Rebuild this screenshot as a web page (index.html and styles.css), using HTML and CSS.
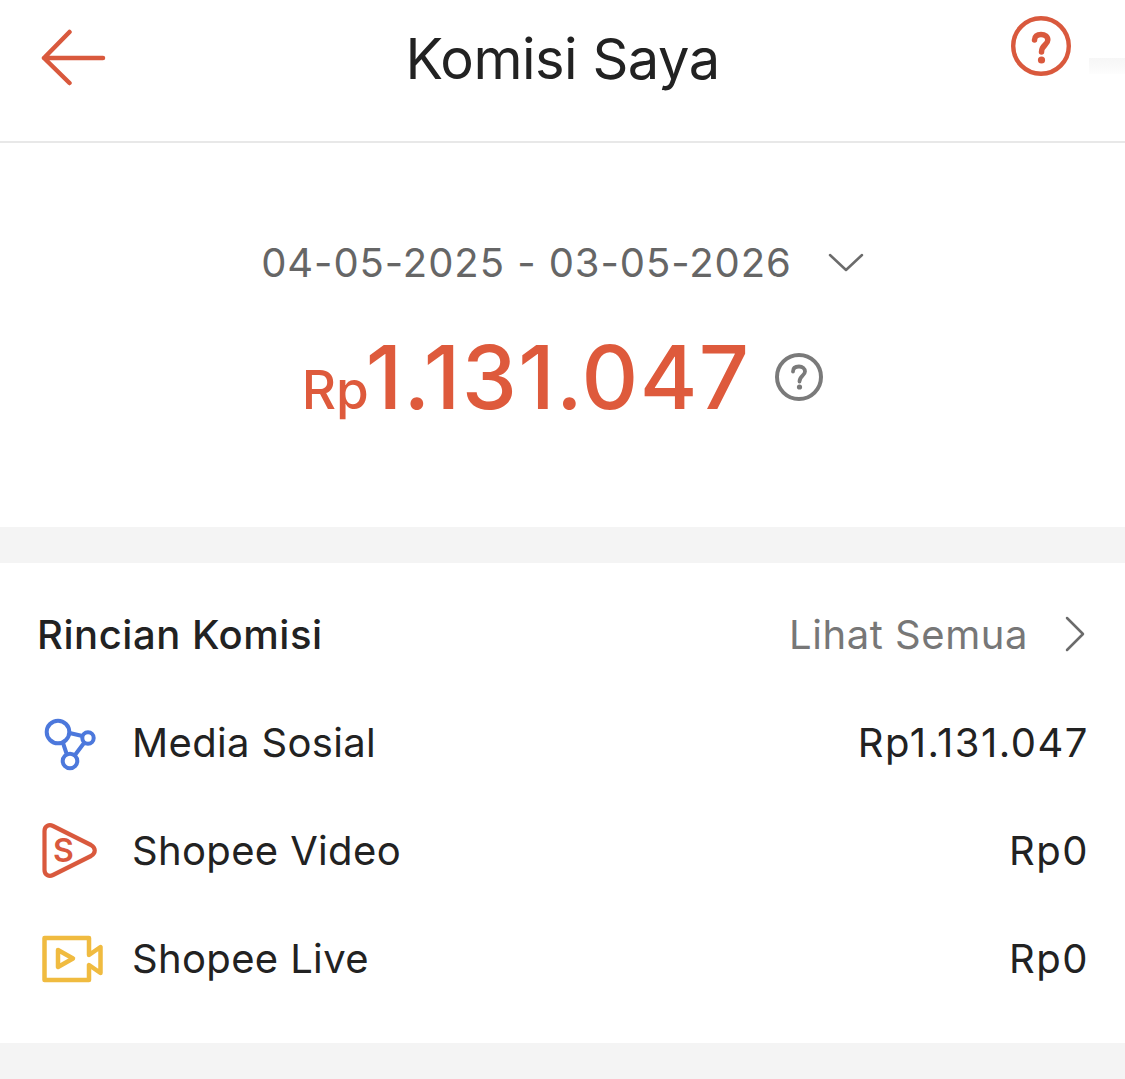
FILE: index.html
```html
<!DOCTYPE html>
<html lang="id">
<head>
    <meta charset="UTF-8">
    <meta name="viewport" content="width=device-width, initial-scale=1.0">
    <title>Komisi Saya</title>
    <link rel="stylesheet" href="styles.css">
</head>
<body>
    <header class="topbar">
        <svg class="back-icon" viewBox="0 0 66 58" fill="none" stroke="#d9593d" stroke-width="4.500" stroke-linecap="round" stroke-linejoin="round">
            <path d="M3 29H62M28.500 3L3 29L28.500 54"/>
        </svg>
        <h1 class="title">Komisi Saya</h1>
        <svg class="help-icon" viewBox="0 0 60 60" fill="none">
            <circle cx="30" cy="30" r="27.800" stroke="#d9593d" stroke-width="4.400"/>
            <path d="M23.500 24C23.500 20.500 26 18.500 30 18.500C34 18.500 36.800 20.500 36.800 24C36.800 29 30.500 29 30.500 36" stroke="#d9593d" stroke-width="5.500" stroke-linecap="round"/>
            <circle cx="30.500" cy="44" r="3.600" fill="#d9593d"/>
        </svg>
        <div class="edge-smudge"></div>
    </header>

    <section class="summary">
        <div class="date-range">
            <span>04-05-2025 - 03-05-2026</span>
            <svg class="chevron-down" viewBox="0 0 36 20" fill="none" stroke="#6b6b6b" stroke-width="2.500" stroke-linecap="round" stroke-linejoin="round">
                <path d="M2 3L18 18L34 3"/>
            </svg>
        </div>
        <div class="total">
            <span class="currency">Rp</span><span class="amount">1.131.047</span>
            <svg class="info-icon" viewBox="0 0 48 48" fill="none">
                <circle cx="24" cy="24" r="22" stroke="#7a7a7a" stroke-width="4"/>
                <path d="M18 18.500C18 15 20.500 13.500 24 13.500C27.500 13.500 30 15.500 30 18.500C30 22.500 24.500 23 24.500 28.500" stroke="#7a7a7a" stroke-width="3.800" stroke-linecap="round"/>
                <circle cx="24.500" cy="34" r="2.600" fill="#7a7a7a"/>
            </svg>
        </div>
    </section>

    <div class="divider"></div>

    <section class="details">
        <div class="details-head">
            <h2 class="details-title">Rincian Komisi</h2>
            <div class="see-all">
                <span>Lihat Semua</span>
                <svg class="chevron-right" viewBox="0 0 20 36" fill="none" stroke="#6b6b6b" stroke-width="2.500" stroke-linecap="round" stroke-linejoin="round">
                    <path d="M2 2L18 18L2 34"/>
                </svg>
            </div>
        </div>

        <div class="row">
            <svg class="row-icon" viewBox="0 0 60 60" fill="none" stroke="#4c78dc" stroke-width="4">
                <circle cx="16" cy="20" r="11.300"/>
                <circle cx="28" cy="49" r="7.300"/>
                <circle cx="46" cy="26" r="5.700"/>
                <path d="M27.500 21L40.500 24M21 31L24.700 42M42 31L33 43"/>
            </svg>
            <span class="row-label">Media Sosial</span>
            <span class="row-value">Rp1.131.047</span>
        </div>
        <div class="row">
            <svg class="row-icon" viewBox="0 0 60 60" fill="none" stroke="#d9593d" stroke-width="4.200" stroke-linejoin="round">
                <path d="M2.500 11C2.500 6 7 4 11 6L49 25C54 28 54 33 49 36L11 55C7 57 2.500 55 2.500 50Z"/>
                <text class="s-mark" x="21.500" y="42">S</text>
            </svg>
            <span class="row-label">Shopee Video</span>
            <span class="row-value">Rp0</span>
        </div>
        <div class="row">
            <svg class="row-icon" viewBox="0 0 60 60" fill="none" stroke="#f0bb40" stroke-width="4.500" stroke-linejoin="round" stroke-linecap="round">
                <path d="M2.500 10H47V27L58.500 19V45L47 37V52H2.500Z"/>
                <path d="M16 22L31 30.500L16 39Z"/>
            </svg>
            <span class="row-label">Shopee Live</span>
            <span class="row-value">Rp0</span>
        </div>
    </section>

    <div class="divider"></div>
</body>
</html>
```

FILE: styles.css
```css
* {
    box-sizing: border-box;
}

html, body {
    margin: 0;
    height: 100%;
    overflow: hidden;
}

body {
    background-color: white;
    color: #222;
    font-family: Inter, "Liberation Sans", sans-serif;
}

.topbar {
    position: relative;
    display: flex;
    align-items: center;
    justify-content: center;
    height: 143px;
    padding-bottom: 2px;
    border-bottom: 2px solid #e8e8e8;
}

.back-icon {
    position: absolute;
    left: 41px;
    top: 29px;
    width: 66px;
    height: 58px;
}

.title {
    margin: 0;
    font-size: 56px;
    font-weight: 400;
    letter-spacing: -0.5px;
    transform: translateY(-11px);
}

.help-icon {
    position: absolute;
    left: 1011px;
    top: 16px;
    width: 60px;
    height: 60px;
}

.edge-smudge {
    position: absolute;
    right: 0;
    top: 58px;
    width: 36px;
    height: 16px;
    background: linear-gradient(#f6f6f6, #fdfdfd);
}

.summary {
    display: flex;
    flex-direction: column;
    align-items: center;
    height: 384px;
    padding-top: 93px;
}

.date-range {
    display: flex;
    align-items: center;
    gap: 36px;
    height: 52px;
    color: #666;
    font-size: 40px;
    letter-spacing: 0.94px;
}

.chevron-down {
    width: 36px;
    height: 20px;
}

.total {
    display: flex;
    align-items: baseline;
    margin-top: 36px;
    color: #de5a3c;
    font-weight: 500;
}

.currency {
    margin-right: -3px;
    font-size: 53px;
}

.amount {
    font-size: 88px;
    letter-spacing: 1.300px;
}

.info-icon {
    align-self: center;
    width: 48px;
    height: 48px;
    margin-left: 25px;
}

.divider {
    height: 36px;
    background-color: #f4f4f4;
}

.details {
    height: 480px;
    padding: 44px 38px 0 38px;
}

.details-head {
    display: flex;
    align-items: center;
    justify-content: space-between;
    height: 54px;
    margin-bottom: 27px;
}

.details-title {
    margin: 0;
    margin-left: -1px;
    font-size: 40px;
    font-weight: 500;
    letter-spacing: 0.55px;
}

.see-all {
    display: flex;
    align-items: center;
    gap: 37px;
    margin-right: 2px;
    color: #777;
    font-size: 40px;
    letter-spacing: 0.55px;
}

.chevron-right {
    width: 20px;
    height: 36px;
}

.row {
    display: flex;
    align-items: center;
    height: 108px;
}

.row-icon {
    flex-shrink: 0;
    width: 60px;
    height: 60px;
    margin-left: 4px;
    margin-right: 30px;
    overflow: visible;
}

.s-mark {
    fill: #d9593d;
    stroke: none;
    font-size: 32px;
    font-weight: 600;
    text-anchor: middle;
}

.row-label {
    flex: 1;
    font-size: 40px;
    letter-spacing: 0.35px;
}

.row-value {
    margin-right: -2px;
    font-size: 40px;
    letter-spacing: 1.500px;
}
```
